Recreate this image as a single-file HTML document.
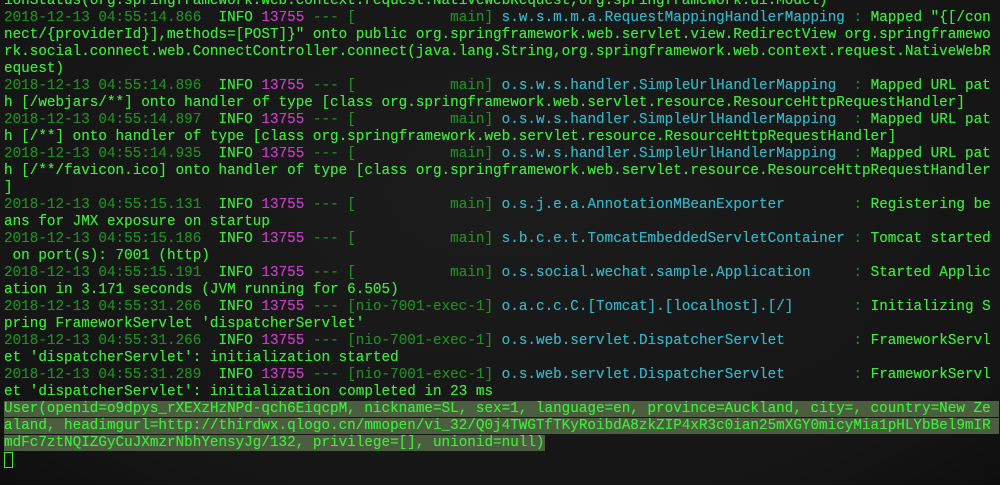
<!DOCTYPE html>
<html><head><meta charset="utf-8"><style>
html,body{margin:0;padding:0;background:#161616;width:1000px;height:485px;overflow:hidden}
body{background:radial-gradient(ellipse at 50% 40%,#1c1c1c 0%,#151515 80%,#0e0e0e 100%)}
#t{position:absolute;left:4px;top:-7px;font-family:"Liberation Mono",monospace;font-size:14.3px;line-height:17px;white-space:pre;color:#3ee83a;text-shadow:0 0 0.4px currentColor}
.d{color:#218a22}.m{color:#c43ec4}.c{color:#35b3c4}.g{color:#3ee83a}
.s{background:#4d5e40}
.cur{display:inline-block;width:7px;height:14px;border:1px solid #3ee83a;vertical-align:-3px}
</style></head><body><div id="t">ionStatus(org.springframework.web.context.request.NativeWebRequest,org.springframework.ui.Model)
<span class="d">2018-12-13 04:55:14.866 </span> INFO <span class="m">13755</span> <span class="d">--- [           main]</span> <span class="c">s.w.s.m.m.a.RequestMappingHandlerMapping</span> <span class="d">:</span> Mapped "{[/con
nect/{providerId}],methods=[POST]}" onto public org.springframework.web.servlet.view.RedirectView org.springframewo
rk.social.connect.web.ConnectController.connect(java.lang.String,org.springframework.web.context.request.NativeWebR
equest)
<span class="d">2018-12-13 04:55:14.896 </span> INFO <span class="m">13755</span> <span class="d">--- [           main]</span> <span class="c">o.s.w.s.handler.SimpleUrlHandlerMapping </span> <span class="d">:</span> Mapped URL pat
h [/webjars/**] onto handler of type [class org.springframework.web.servlet.resource.ResourceHttpRequestHandler]
<span class="d">2018-12-13 04:55:14.897 </span> INFO <span class="m">13755</span> <span class="d">--- [           main]</span> <span class="c">o.s.w.s.handler.SimpleUrlHandlerMapping </span> <span class="d">:</span> Mapped URL pat
h [/**] onto handler of type [class org.springframework.web.servlet.resource.ResourceHttpRequestHandler]
<span class="d">2018-12-13 04:55:14.935 </span> INFO <span class="m">13755</span> <span class="d">--- [           main]</span> <span class="c">o.s.w.s.handler.SimpleUrlHandlerMapping </span> <span class="d">:</span> Mapped URL pat
h [/**/favicon.ico] onto handler of type [class org.springframework.web.servlet.resource.ResourceHttpRequestHandler
]
<span class="d">2018-12-13 04:55:15.131 </span> INFO <span class="m">13755</span> <span class="d">--- [           main]</span> <span class="c">o.s.j.e.a.AnnotationMBeanExporter       </span> <span class="d">:</span> Registering be
ans for JMX exposure on startup
<span class="d">2018-12-13 04:55:15.186 </span> INFO <span class="m">13755</span> <span class="d">--- [           main]</span> <span class="c">s.b.c.e.t.TomcatEmbeddedServletContainer</span> <span class="d">:</span> Tomcat started
 on port(s): 7001 (http)
<span class="d">2018-12-13 04:55:15.191 </span> INFO <span class="m">13755</span> <span class="d">--- [           main]</span> <span class="c">o.s.social.wechat.sample.Application    </span> <span class="d">:</span> Started Applic
ation in 3.171 seconds (JVM running for 6.505)
<span class="d">2018-12-13 04:55:31.266 </span> INFO <span class="m">13755</span> <span class="d">--- [nio-7001-exec-1]</span> <span class="c">o.a.c.c.C.[Tomcat].[localhost].[/]      </span> <span class="d">:</span> Initializing S
pring FrameworkServlet 'dispatcherServlet'
<span class="d">2018-12-13 04:55:31.266 </span> INFO <span class="m">13755</span> <span class="d">--- [nio-7001-exec-1]</span> <span class="c">o.s.web.servlet.DispatcherServlet       </span> <span class="d">:</span> FrameworkServl
et 'dispatcherServlet': initialization started
<span class="d">2018-12-13 04:55:31.289 </span> INFO <span class="m">13755</span> <span class="d">--- [nio-7001-exec-1]</span> <span class="c">o.s.web.servlet.DispatcherServlet       </span> <span class="d">:</span> FrameworkServl
et 'dispatcherServlet': initialization completed in 23 ms
<span class="s">User(openid=o9dpys_rXEXzHzNPd-qch6EiqcpM, nickname=SL, sex=1, language=en, province=Auckland, city=, country=New Ze </span>
<span class="s">aland, headimgurl=http://thirdwx.qlogo.cn/mmopen/vi_32/Q0j4TWGTfTKyRoibdA8zkZIP4xR3c0ian25mXGY0micyMia1pHLYbBel9mIR </span>
<span class="s">mdFc7ztNQIZGyCuJXmzrNbhYensyJg/132, privilege=[], unionid=null)</span>
<span class="cur"></span></div></body></html>
